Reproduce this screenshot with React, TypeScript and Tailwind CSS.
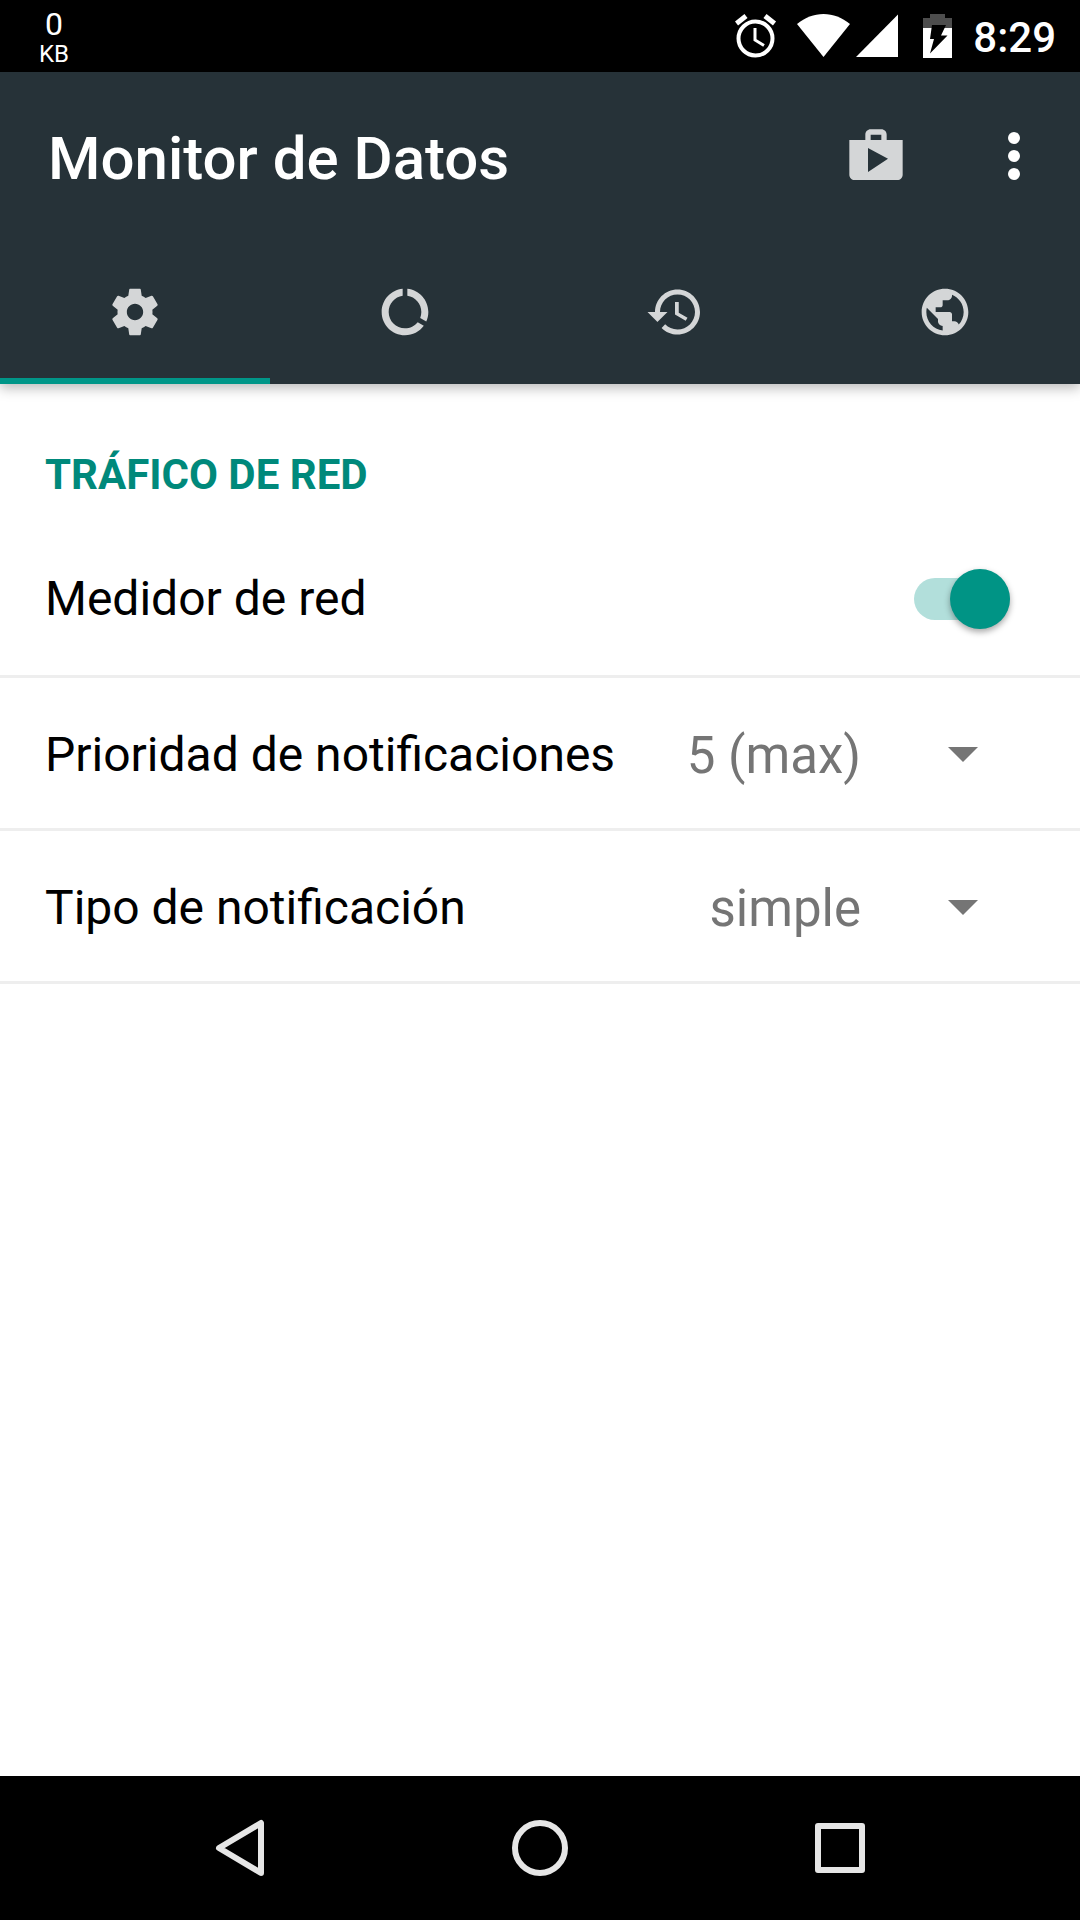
import { useState } from 'react';
import clsx from 'clsx';

const tabs = [
  {
    id: 'settings',
    label: 'Ajustes',
    size: 'size-14',
    path: 'M19.43 12.98c.04-.32.07-.64.07-.98s-.03-.66-.07-.98l2.11-1.65c.19-.15.24-.42.12-.64l-2-3.46c-.12-.22-.39-.3-.61-.22l-2.49 1c-.52-.4-1.08-.73-1.69-.98l-.38-2.65C14.46 2.18 14.25 2 14 2h-4c-.25 0-.46.18-.49.42l-.38 2.65c-.61.25-1.17.59-1.69.98l-2.49-1c-.23-.09-.49 0-.61.22l-2 3.46c-.13.22-.07.49.12.64l2.11 1.65c-.04.32-.07.65-.07.98s.03.66.07.98l-2.11 1.65c-.19.15-.24.42-.12.64l2 3.46c.12.22.39.3.61.22l2.49-1c.52.4 1.08.73 1.69.98l.38 2.65c.03.24.24.42.49.42h4c.25 0 .46-.18.49-.42l.38-2.65c.61-.25 1.17-.59 1.69-.98l2.49 1c.23.09.49 0 .61-.22l2-3.46c.12-.22.07-.49-.12-.64l-2.11-1.65zM12 15.5c-1.93 0-3.5-1.57-3.5-3.5s1.57-3.5 3.5-3.5 3.5 1.57 3.5 3.5-1.57 3.5-3.5 3.5z',
  },
  {
    id: 'usage',
    label: 'Uso de datos',
    size: 'size-14',
    path: 'M13 2.05v3.03c3.39.49 6 3.39 6 6.92 0 .9-.18 1.75-.48 2.54l2.6 1.53c.56-1.24.88-2.62.88-4.07 0-5.18-3.95-9.45-9-9.95zM12 19c-3.87 0-7-3.13-7-7 0-3.53 2.61-6.43 6-6.92V2.05c-5.06.5-9 4.76-9 9.95 0 5.52 4.47 10 9.99 10 3.31 0 6.24-1.61 8.06-4.09l-2.6-1.53C16.17 17.98 14.21 19 12 19z',
  },
  {
    id: 'history',
    label: 'Historial',
    size: 'size-[60px]',
    path: 'M13 3c-4.97 0-9 4.03-9 9H1l3.89 3.89.07.14L9 12H6c0-3.87 3.13-7 7-7s7 3.13 7 7-3.13 7-7 7c-1.93 0-3.68-.79-4.94-2.06l-1.42 1.42C8.27 19.99 10.51 21 13 21c4.97 0 9-4.03 9-9s-4.03-9-9-9zm-1 5v5l4.28 2.54.72-1.21-3.5-2.08V8H12z',
  },
  {
    id: 'network',
    label: 'Red',
    size: 'size-14',
    path: 'M12 2C6.48 2 2 6.48 2 12s4.48 10 10 10 10-4.48 10-10S17.52 2 12 2zm-1 17.93c-3.95-.49-7-3.85-7-7.93 0-.62.08-1.21.21-1.79L9 15v1c0 1.1.9 2 2 2v1.93zm6.9-2.54c-.26-.81-1-1.39-1.9-1.39h-1v-3c0-.55-.45-1-1-1H8v-2h2c.55 0 1-.45 1-1V7h2c1.1 0 2-.9 2-2v-.41c2.93 1.19 5 4.06 5 7.41 0 2.08-.8 3.97-2.1 5.39z',
  },
];

const selects = [
  {
    id: 'priority',
    label: 'Prioridad de notificaciones',
    initial: '5 (max)',
    options: ['1 (min)', '2', '3', '4', '5 (max)'],
  },
  {
    id: 'type',
    label: 'Tipo de notificación',
    initial: 'simple',
    options: ['simple', 'detallada'],
  },
];

function StatusBar() {
  return (
    <div className="flex h-[72px] items-center justify-between bg-black pr-6 pl-[39px] text-white">
      <div className="flex flex-col items-center pt-0.5">
        <span className="text-[32px] leading-[34px]">0</span>
        <span className="text-2xl leading-[26px]">KB</span>
      </div>
      <div className="flex items-center">
        <svg className="mr-5 h-11 w-[42px]" viewBox="0 0 42 44" fill="none" stroke="currentColor" aria-hidden="true">
          <circle cx="20.5" cy="24.5" r="17" strokeWidth="4" />
          <path d="M20 14v12l9 5.5" strokeWidth="3" />
          <path d="M1.5 9.5l9.5-7.5M39.5 9.5L30 2" strokeWidth="5" />
        </svg>
        <svg className="mr-[5px] h-11 w-[54px]" viewBox="0 0 54 44" fill="currentColor" aria-hidden="true">
          <path d="M26.5 43L0 10C8 3.5 17 0 26.5 0S45 3.5 53 10z" />
        </svg>
        <svg className="mr-[25px] h-11 w-[42px]" viewBox="0 0 42 44" fill="currentColor" aria-hidden="true">
          <path d="M42 0.5V43H0z" />
        </svg>
        <svg className="mr-[21px] h-11 w-[29px]" viewBox="0 0 29 44" aria-hidden="true">
          <path d="M7 0h15v4h7v11H0V4h7z" fill="#4d4d4d" />
          <path d="M0 14h29v30H0z" fill="#fff" />
          <path d="M9 11h14l-5 10.5h6.5L7 39.5l4-14.5H7z" fill="#000" />
        </svg>
        <time className="pt-[3px] text-[42px] leading-none font-medium">8:29</time>
      </div>
    </div>
  );
}

function NavBar() {
  return (
    <nav className="flex h-36 bg-black px-[90px] text-[#e6e6e6]">
      <button type="button" aria-label="Atrás" className="flex flex-1 items-center justify-center">
        <svg className="size-[60px]" viewBox="0 0 60 60" fill="none" stroke="currentColor" strokeWidth="6" strokeLinejoin="round">
          <path d="M51 5v50L9 30z" />
        </svg>
      </button>
      <button type="button" aria-label="Inicio" className="flex flex-1 items-center justify-center">
        <svg className="size-[60px]" viewBox="0 0 60 60" fill="none" stroke="currentColor" strokeWidth="6">
          <circle cx="30" cy="30" r="25" />
        </svg>
      </button>
      <button type="button" aria-label="Recientes" className="flex flex-1 items-center justify-center">
        <svg className="size-[60px]" viewBox="0 0 60 60" fill="none" stroke="currentColor" strokeWidth="6" strokeLinejoin="round">
          <path d="M8 8h44v44H8z" />
        </svg>
      </button>
    </nav>
  );
}

export default function App() {
  const [activeTab, setActiveTab] = useState('settings');
  const [meterOn, setMeterOn] = useState(true);

  return (
    <div className="flex min-h-screen flex-col bg-white font-[Roboto,sans-serif]">
      <StatusBar />

      {/* App bar and tabs */}
      <header className="relative bg-[#263238] shadow-[0_4px_12px_rgba(0,0,0,0.28)]">
        <div className="flex h-[168px] items-center pr-6 pl-12">
          <h1 className="flex-1 pt-1.5 text-6xl font-medium text-white">Monitor de Datos</h1>
          <button type="button" aria-label="Tienda" className="flex h-24 w-24 items-center justify-center text-[#d4d6d7]">
            <svg className="size-16" viewBox="0 0 24 24" fill="currentColor">
              <path d="M16 6V4c0-1.11-.89-2-2-2h-4c-1.11 0-2 .89-2 2v2H2v13c0 1.11.89 2 2 2h16c1.11 0 2-.89 2-2V6h-6zm-6-2h4v2h-4V4zM9 18V9l7.5 4L9 18z" />
            </svg>
          </button>
          <button type="button" aria-label="Más opciones" className="ml-12 flex h-24 w-[84px] items-center justify-center text-white">
            <svg className="h-12 w-3" viewBox="0 0 12 48" fill="currentColor">
              <circle cx="6" cy="6" r="6" />
              <circle cx="6" cy="24" r="6" />
              <circle cx="6" cy="42" r="6" />
            </svg>
          </button>
        </div>
        <div role="tablist" className="grid h-36 grid-cols-4">
          {tabs.map((tab) => (
            <button
              key={tab.id}
              type="button"
              role="tab"
              aria-label={tab.label}
              aria-selected={activeTab === tab.id}
              onClick={() => setActiveTab(tab.id)}
              className={clsx(
                'flex items-center justify-center border-y-6 border-t-transparent text-[#d4d6d7]',
                activeTab === tab.id ? 'border-b-[#009688]' : 'border-b-transparent'
              )}
            >
              <svg className={tab.size} viewBox="0 0 24 24" fill="currentColor">
                <path d={tab.path} />
              </svg>
            </button>
          ))}
        </div>
      </header>

      <main className="flex-1">
        <h2 className="flex h-[138px] items-center pt-[42px] pl-[45px] text-[42px] font-bold text-[#00897b]">
          TRÁFICO DE RED
        </h2>

        <div className="flex h-[156px] items-center justify-between border-b-3 border-[#eeeeee] pr-[70px] pl-[45px]">
          <label htmlFor="meter" className="text-5xl text-black">Medidor de red</label>
          <div className="relative flex h-[60px] w-24 items-center">
            <input
              id="meter"
              type="checkbox"
              role="switch"
              checked={meterOn}
              onChange={(e) => setMeterOn(e.target.checked)}
              className="peer h-[42px] w-full appearance-none rounded-full bg-[#bdbdbd] checked:bg-[#b2dfdb]"
            />
            <span className="pointer-events-none absolute left-0 size-[60px] rounded-full bg-[#fafafa] shadow-[0_3px_6px_rgba(0,0,0,0.35)] peer-checked:right-0 peer-checked:left-auto peer-checked:bg-[#009485]" />
          </div>
        </div>

        {selects.map((item) => (
          <div key={item.id} className="flex h-[153px] items-center justify-between border-b-3 border-[#eeeeee] pt-[3px] pr-[70px] pl-[45px]">
            <label htmlFor={item.id} className="text-5xl text-black">{item.label}</label>
            <div className="relative flex items-center">
              <select
                id={item.id}
                defaultValue={item.initial}
                className="appearance-none bg-transparent pt-0.5 pr-[149px] text-right text-[51px] leading-[60px] text-[#757575] [text-align-last:right]"
              >
                {item.options.map((option) => (
                  <option key={option}>{option}</option>
                ))}
              </select>
              <svg className="pointer-events-none absolute right-8 h-[15px] w-[30px]" viewBox="0 0 30 15" fill="#757575" aria-hidden="true">
                <path d="M0 0h30L15 15z" />
              </svg>
            </div>
          </div>
        ))}
      </main>

      <NavBar />
    </div>
  );
}
